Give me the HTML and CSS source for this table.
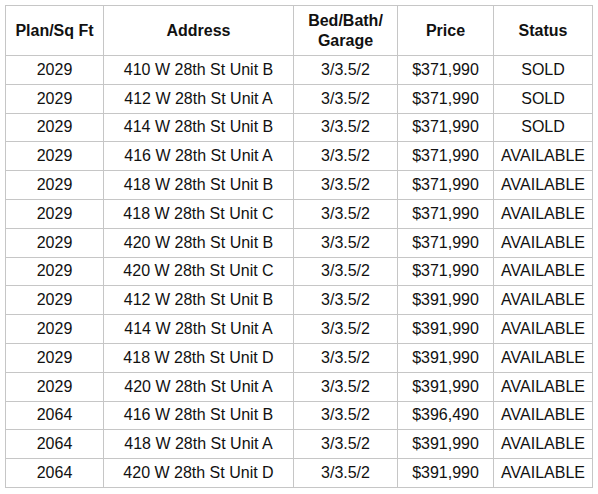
FILE: index.html
```html
<!DOCTYPE html>
<html>
<head>
<meta charset="utf-8">
<link rel="stylesheet" href="styles.css">
</head>
<body>
<div class="wrap">
<table class="homes">
<colgroup>
<col class="c-plan"><col class="c-addr"><col class="c-bed"><col class="c-price"><col class="c-status">
</colgroup>
<thead>
<tr><th>Plan/Sq Ft</th><th>Address</th><th>Bed/Bath/<br>Garage</th><th>Price</th><th>Status</th></tr>
</thead>
<tbody>
<tr><td>2029</td><td>410 W 28th St Unit B</td><td>3/3.5/2</td><td>$371,990</td><td>SOLD</td></tr>
<tr><td>2029</td><td>412 W 28th St Unit A</td><td>3/3.5/2</td><td>$371,990</td><td>SOLD</td></tr>
<tr><td>2029</td><td>414 W 28th St Unit B</td><td>3/3.5/2</td><td>$371,990</td><td>SOLD</td></tr>
<tr><td>2029</td><td>416 W 28th St Unit A</td><td>3/3.5/2</td><td>$371,990</td><td>AVAILABLE</td></tr>
<tr><td>2029</td><td>418 W 28th St Unit B</td><td>3/3.5/2</td><td>$371,990</td><td>AVAILABLE</td></tr>
<tr><td>2029</td><td>418 W 28th St Unit C</td><td>3/3.5/2</td><td>$371,990</td><td>AVAILABLE</td></tr>
<tr><td>2029</td><td>420 W 28th St Unit B</td><td>3/3.5/2</td><td>$371,990</td><td>AVAILABLE</td></tr>
<tr><td>2029</td><td>420 W 28th St Unit C</td><td>3/3.5/2</td><td>$371,990</td><td>AVAILABLE</td></tr>
<tr><td>2029</td><td>412 W 28th St Unit B</td><td>3/3.5/2</td><td>$391,990</td><td>AVAILABLE</td></tr>
<tr><td>2029</td><td>414 W 28th St Unit A</td><td>3/3.5/2</td><td>$391,990</td><td>AVAILABLE</td></tr>
<tr><td>2029</td><td>418 W 28th St Unit D</td><td>3/3.5/2</td><td>$391,990</td><td>AVAILABLE</td></tr>
<tr><td>2029</td><td>420 W 28th St Unit A</td><td>3/3.5/2</td><td>$391,990</td><td>AVAILABLE</td></tr>
<tr><td>2064</td><td>416 W 28th St Unit B</td><td>3/3.5/2</td><td>$396,490</td><td>AVAILABLE</td></tr>
<tr><td>2064</td><td>418 W 28th St Unit A</td><td>3/3.5/2</td><td>$391,990</td><td>AVAILABLE</td></tr>
<tr><td>2064</td><td>420 W 28th St Unit D</td><td>3/3.5/2</td><td>$391,990</td><td>AVAILABLE</td></tr>
</tbody>
</table>
</div>
</body>
</html>
```

FILE: styles.css
```css
html, body {
  margin: 0;
  padding: 0;
  background: #ffffff;
}
.wrap {
  padding: 5px 0 0 5px;
}
.homes {
  border-collapse: collapse;
  table-layout: fixed;
  width: 587px;
  font-family: "Liberation Sans", Arial, Helvetica, sans-serif;
  font-size: 16px;
  color: #111111;
}
.c-plan { width: 98px; }
.c-addr { width: 190px; }
.c-bed { width: 104px; }
.c-price { width: 96px; }
.c-status { width: 99px; }
.homes th,
.homes td {
  border: 1px solid #c6c6c6;
  text-align: center;
  vertical-align: middle;
  padding: 0;
  white-space: nowrap;
}
.homes th {
  height: 49px;
  font-weight: bold;
  line-height: 20px;
}
.homes td {
  height: 27.8px;
  line-height: 20px;
}
```
